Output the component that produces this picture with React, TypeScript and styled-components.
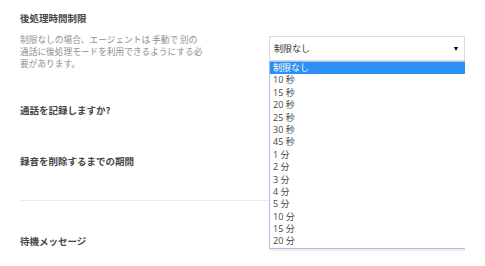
import React from "react";
import styled, { createGlobalStyle } from "styled-components";

const Global = createGlobalStyle`
  html, body { margin: 0; padding: 0; background: #fff; }
  body { font-family: "Open Sans", "Noto Sans CJK JP", sans-serif; }
`;

const Page = styled.div`
  padding: 0 0 0 20px;
  width: 465px;
  height: 266px;
  overflow: hidden;
  box-sizing: border-box;
`;

const Row = styled.div<{ $top: number }>`
  display: flex;
  align-items: flex-start;
  padding-top: ${(p) => p.$top}px;
`;

const LeftCol = styled.div`
  width: 249px;
  flex: none;
`;

const Heading = styled.div`
  font-family: "Noto Sans CJK JP", sans-serif;
  font-size: 9.5px;
  font-weight: 700;
  line-height: 14px;
  color: #454545;
  white-space: nowrap;
`;

const Desc = styled.div`
  margin-top: 9px;
  font-family: "Noto Sans CJK JP", sans-serif;
  font-size: 8.7px;
  line-height: 12px;
  color: #8e8e8e;
  white-space: nowrap;
`;

const RightCol = styled.div`
  position: relative;
  width: 203px;
  padding-top: 25px;
`;

const Select = styled.div`
  height: 25px;
  box-sizing: border-box;
  border: 1px solid #dcdcdc;
  display: flex;
  align-items: center;
  justify-content: space-between;
  padding: 0 6px 0 4px;
  font-size: 9px;
  color: #333;
  background: #fff;
`;

const Arrow = styled.span`
  width: 0;
  height: 0;
  border-left: 2.5px solid transparent;
  border-right: 2.5px solid transparent;
  border-top: 4px solid #000;
  margin-top: 1px;
`;

const List = styled.ul`
  position: absolute;
  left: 0;
  top: 50px;
  width: 202px;
  box-sizing: border-box;
  margin: 0;
  padding: 0;
  list-style: none;
  background: #fff;
  border: 1px solid #a9c0e3;
  box-shadow: 0 2px 0 #eeeeee;
  z-index: 2;
`;

const Item = styled.li<{ $active?: boolean }>`
  height: 12.4px;
  line-height: 12.4px;
  padding-left: 3px;
  font-size: 9px;
  white-space: nowrap;
  color: ${(p) => (p.$active ? "#fff" : "#444")};
  background: ${(p) => (p.$active ? "#2a8ff7" : "transparent")};
`;

const Divider = styled.hr<{ $top: number }>`
  margin: ${(p) => p.$top}px 0 0 0;
  border: 0;
  border-top: 1px solid #ececec;
  height: 0;
`;

const options = [
  "制限なし",
  "10 秒",
  "15 秒",
  "20 秒",
  "25 秒",
  "30 秒",
  "45 秒",
  "1 分",
  "2 分",
  "3 分",
  "4 分",
  "5 分",
  "10 分",
  "15 分",
  "20 分",
];

export default function App() {
  return (
    <>
      <Global />
      <Page>
        <Row $top={11}>
          <LeftCol>
            <Heading>後処理時間制限</Heading>
            <Desc>
              制限なしの場合、エージェントは 手動で 別の
              <br />
              通話に後処理モードを利用できるようにする必
              <br />
              要があります。
            </Desc>
          </LeftCol>
          <RightCol>
            <Select>
              <span>制限なし</span>
              <Arrow />
            </Select>
            <List>
              {options.map((o, i) => (
                <Item key={o} $active={i === 0}>
                  {o}
                </Item>
              ))}
            </List>
          </RightCol>
        </Row>
        <Row $top={33}>
          <Heading>通話を記録しますか?</Heading>
        </Row>
        <Row $top={37}>
          <Heading>録音を削除するまでの期間</Heading>
        </Row>
        <Divider $top={32} />
        <Row $top={33}>
          <Heading>待機メッセージ</Heading>
        </Row>
      </Page>
    </>
  );
}
